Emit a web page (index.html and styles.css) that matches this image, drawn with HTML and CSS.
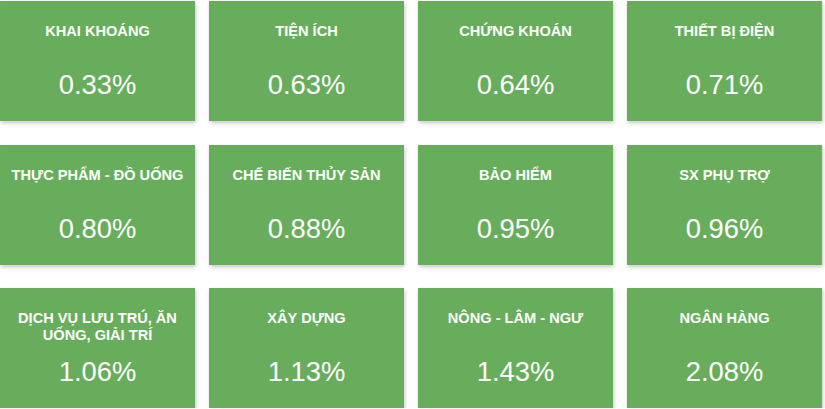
FILE: index.html
```html
<!DOCTYPE html>
<html lang="vi">
<head>
<meta charset="utf-8">
<link rel="stylesheet" href="styles.css">
</head>
<body>
<div class="grid">
  <div class="card"><div class="title">KHAI KHOÁNG</div><div class="value">0.33%</div></div>
  <div class="card"><div class="title">TIỆN ÍCH</div><div class="value">0.63%</div></div>
  <div class="card"><div class="title">CHỨNG KHOÁN</div><div class="value">0.64%</div></div>
  <div class="card"><div class="title">THIẾT BỊ ĐIỆN</div><div class="value">0.71%</div></div>
  <div class="card"><div class="title">THỰC PHẨM - ĐỒ UỐNG</div><div class="value">0.80%</div></div>
  <div class="card"><div class="title">CHẾ BIẾN THỦY SẢN</div><div class="value">0.88%</div></div>
  <div class="card"><div class="title">BẢO HIỂM</div><div class="value">0.95%</div></div>
  <div class="card"><div class="title">SX PHỤ TRỢ</div><div class="value">0.96%</div></div>
  <div class="card"><div class="title">DỊCH VỤ LƯU TRÚ, ĂN UỐNG, GIẢI TRÍ</div><div class="value">1.06%</div></div>
  <div class="card"><div class="title">XÂY DỰNG</div><div class="value">1.13%</div></div>
  <div class="card"><div class="title">NÔNG - LÂM - NGƯ</div><div class="value">1.43%</div></div>
  <div class="card"><div class="title">NGÂN HÀNG</div><div class="value">2.08%</div></div>
</div>
</body>
</html>
```
FILE: styles.css
```css
html, body {
  margin: 0;
  padding: 0;
  background: #ffffff;
}
body {
  font-family: "Liberation Sans", Arial, sans-serif;
  color: #ffffff;
}
.grid {
  display: grid;
  grid-template-columns: repeat(4, 195px);
  grid-auto-rows: 120px;
  column-gap: 14px;
  row-gap: 23.5px;
  padding-top: 1px;
}
.card {
  background: #67ad5b;
  box-shadow: 1px 2px 4px rgba(0, 0, 0, 0.22);
  text-align: center;
  padding: 22px 6px 0;
  box-sizing: border-box;
}
.title {
  font-weight: bold;
  font-size: 14.6px;
  line-height: 17px;
  height: 34px;
}
.value {
  margin-top: 13px;
  font-size: 27.4px;
  line-height: 30px;
}
```
